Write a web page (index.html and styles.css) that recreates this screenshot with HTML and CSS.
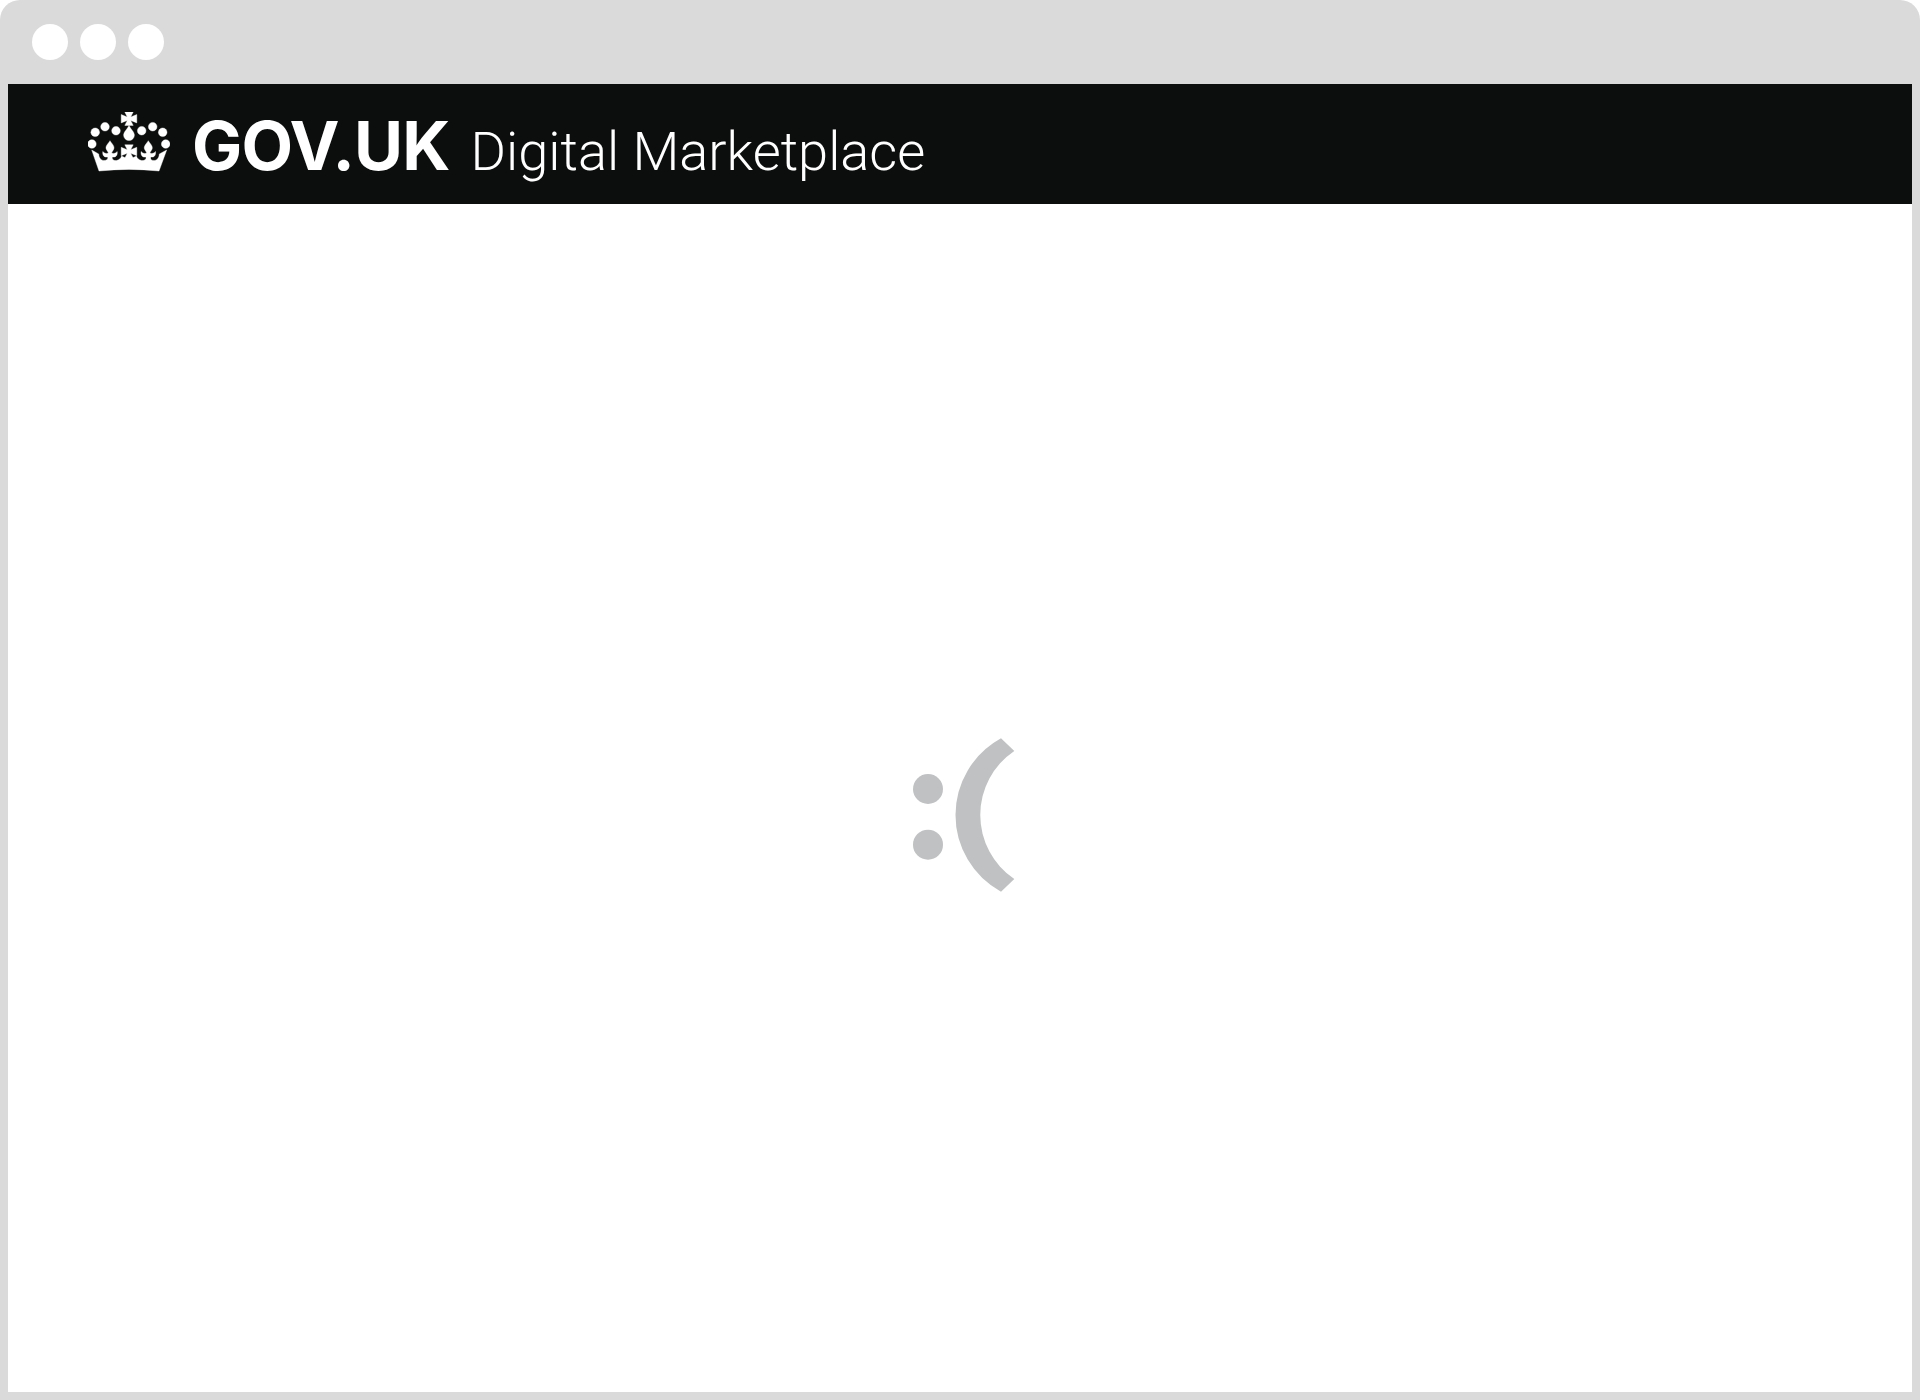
FILE: index.html
```html
<!DOCTYPE html>
<html lang="en">
  <head>
    <meta charset="UTF-8" />
    <title>Digital Marketplace</title>
    <link rel="stylesheet" href="styles.css">
  </head>
  <body>
    <div class="window">
      <div class="window-bar">
        <span class="window-dot"></span>
        <span class="window-dot"></span>
        <span class="window-dot"></span>
      </div>

      <header class="site-header">
        <svg class="crown" viewBox="0 0 82 62" aria-hidden="true">
          <defs>
            <path id="cross" d="M-4.200 -6.700H4.200L1.700 -1.700 7.800 -4.200V4.200L1.700 1.700 4.200 6.700H-4.200L-1.700 1.700-7.800 4.200V-4.200L-1.700 -1.700z" />
            <g id="fleur">
              <path d="M22 28.700C24 32 26.800 34 25.800 37 25.300 38.500 24 39.500 23.500 41H20.500C20 39.500 18.700 38.500 18.200 37 17.200 34 20 32 22 28.700z" />
              <path d="M14.800 39.500C17 42 19 41.500 20.500 41H23.500C25 41.500 27 42 29.200 39.500 29.700 43 28 45.500 25 45H24V50H20V45H19C16 45.500 14.300 43 14.800 39.500z" />
            </g>
          </defs>
          <!-- top cross and drop -->
          <use href="#cross" x="41" y="6.700" />
          <path d="M41 13.500C42.600 17.100 46.400 19.900 46.400 23.100A5.400 5.400 0 0 1 35.600 23.100C35.600 19.900 39.400 17.100 41 13.500z" />
          <!-- pearls -->
          <circle cx="3.900" cy="32" r="4.300" />
          <circle cx="7.200" cy="20.300" r="4.300" />
          <circle cx="17" cy="14.700" r="4.300" />
          <circle cx="28" cy="18.700" r="4.300" />
          <circle cx="53.700" cy="18.700" r="4.300" />
          <circle cx="64.700" cy="14.700" r="4.300" />
          <circle cx="74.700" cy="20.300" r="4.300" />
          <circle cx="77.700" cy="32" r="4.300" />
          <!-- fleurs and middle cross -->
          <use href="#fleur" />
          <use href="#fleur" x="38.300" />
          <use href="#cross" x="41" y="39.500" />
          <!-- crown body -->
          <path d="M3.700 38L10.700 42C11 46 13 48.500 16 48.500 19 48.500 20 47 20 45H24C24 47.500 25.500 49 28.500 48.500 31.500 48 33 46 33.600 44L37.600 46H44.400L48.400 44C49 46 50.500 48 53.500 48.500 56.500 49 58.300 47.500 58.300 45H62.300C62.300 47 63 48.500 66 48.500 69 48.500 71 46 71.300 42L78.700 38 71 59Q41 55.800 11 59z" />
        </svg>
        <span class="brand">GOV.UK</span>
        <span class="service-name">Digital Marketplace</span>
      </header>

      <main class="error-page">
        <svg class="sad-face" viewBox="0 0 104 156" fill="#c0c1c3" role="img" aria-label="Sad face">
          <circle cx="15" cy="52" r="15" />
          <circle cx="15" cy="107.700" r="15" />
          <path d="M88 1.300A87.400 87.400 0 0 0 88 154.700L101.300 142A77.200 77.200 0 0 1 101.300 14z" />
        </svg>
      </main>
    </div>
  </body>
</html>
```

FILE: styles.css
```css
* {
  box-sizing: border-box;
}

body {
  margin: 0;
  background-color: #fff;
  font-family: "Roboto", "Liberation Sans", sans-serif;
}

.window {
  display: flex;
  flex-direction: column;
  height: 1400px;
  padding: 0 8px 8px;
  background-color: #dadada;
  border-radius: 20px 20px 0 0;
}

.window-bar {
  display: flex;
  gap: 12px;
  flex: 0 0 84px;
  padding: 24px 0 0 24px;
}

.window-dot {
  width: 36px;
  height: 36px;
  border-radius: 50%;
  background-color: #fff;
}

.site-header {
  display: flex;
  align-items: baseline;
  flex: 0 0 120px;
  padding: 28px 0 0 80px;
  background-color: #0c0e0d;
  color: #fff;
}

.crown {
  align-self: flex-start;
  flex: 0 0 82px;
  width: 82px;
  height: 62px;
  fill: #fff;
  stroke: #fff;
  stroke-width: 0.400;
}

.brand {
  margin-left: 22px;
  font-family: "Inter", "Liberation Sans", sans-serif;
  font-size: 67px;
  font-weight: 700;
  line-height: 1;
  letter-spacing: -0.800px;
}

.service-name {
  margin-left: 21px;
  font-size: 54.200px;
  font-weight: 300;
  line-height: 1;
}

.error-page {
  display: flex;
  flex: 1;
  align-items: center;
  justify-content: center;
  padding: 33px 0 0 9px;
  background-color: #fff;
}

.sad-face {
  width: 104px;
  height: 156px;
}
```
